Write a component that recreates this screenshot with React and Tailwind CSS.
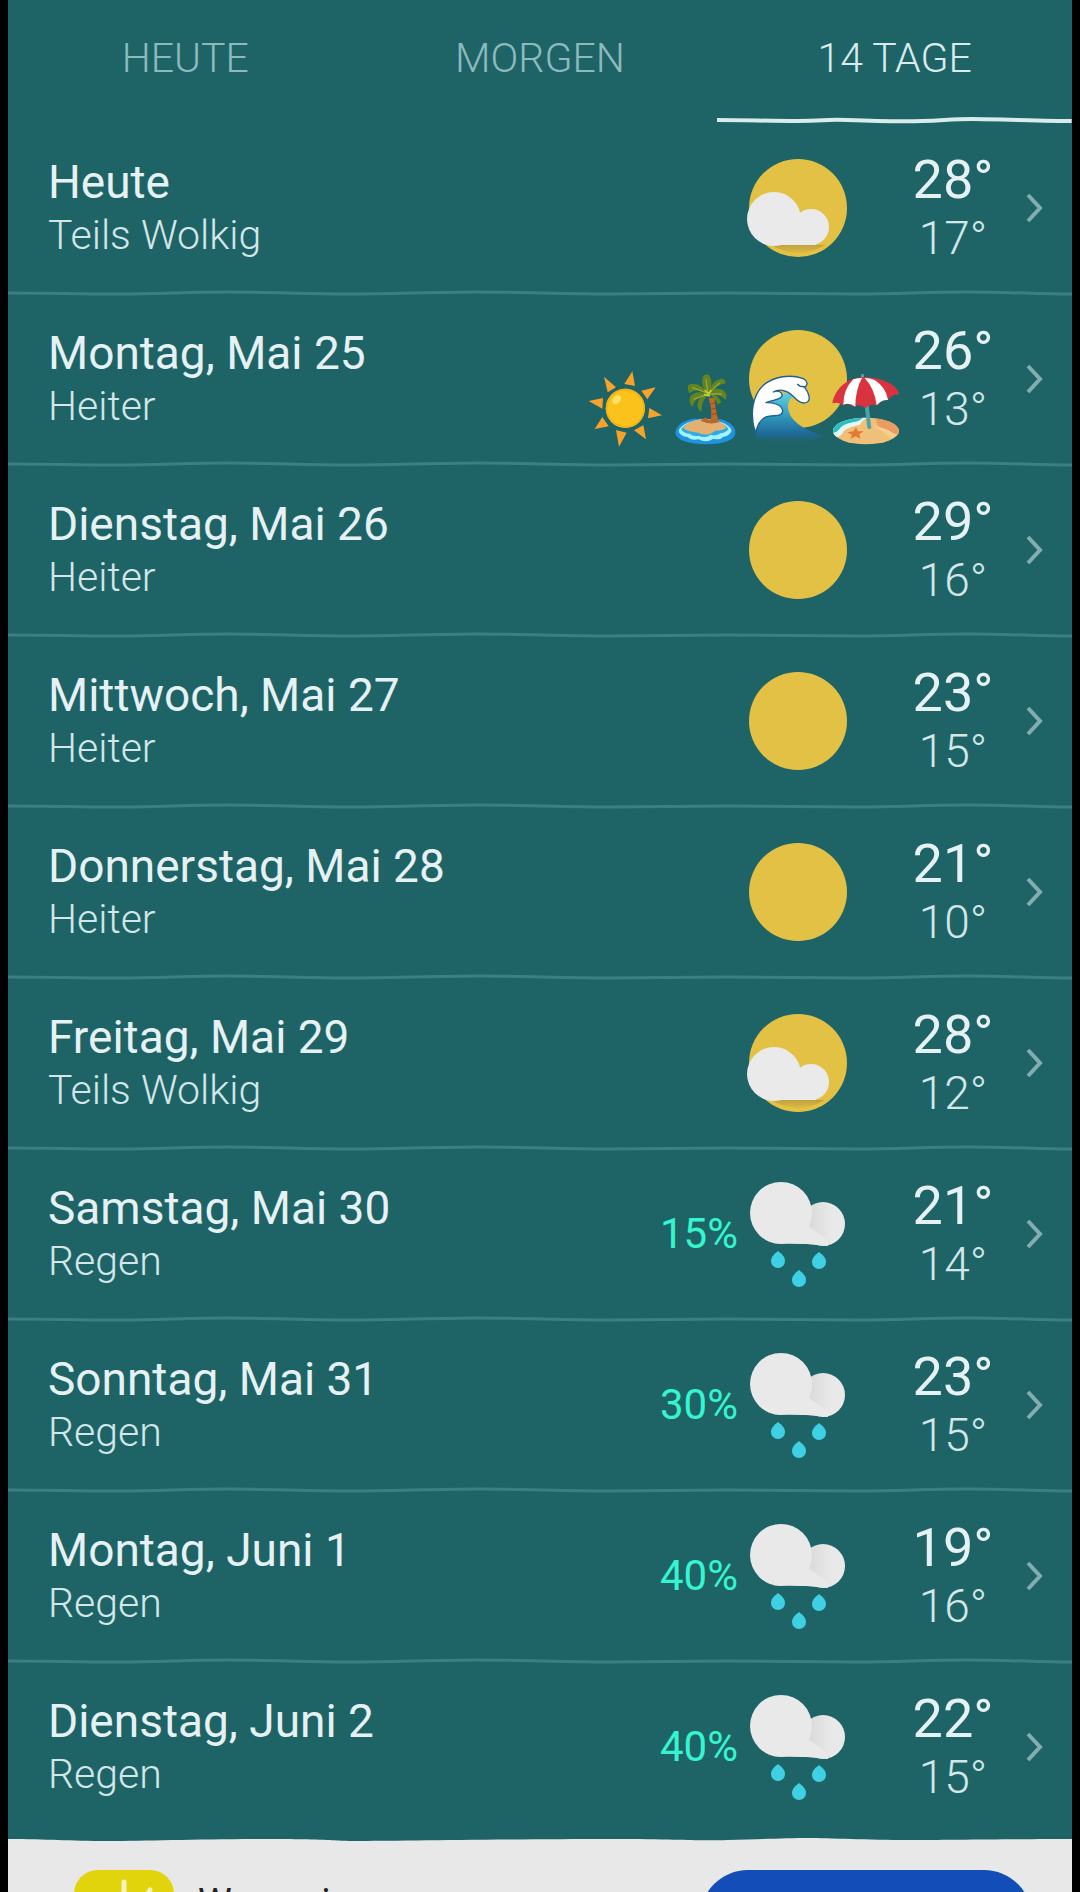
import React, { useState } from "react";

const tabs = ["HEUTE", "MORGEN", "14 TAGE"];

const days = [
  { day: "Heute", text: "Teils Wolkig", icon: "partly", high: 28, low: 17 },
  { day: "Montag, Mai 25", text: "Heiter", icon: "sun", high: 26, low: 13, stickers: true },
  { day: "Dienstag, Mai 26", text: "Heiter", icon: "sun", high: 29, low: 16 },
  { day: "Mittwoch, Mai 27", text: "Heiter", icon: "sun", high: 23, low: 15 },
  { day: "Donnerstag, Mai 28", text: "Heiter", icon: "sun", high: 21, low: 10 },
  { day: "Freitag, Mai 29", text: "Teils Wolkig", icon: "partly", high: 28, low: 12 },
  { day: "Samstag, Mai 30", text: "Regen", icon: "rain", rain: 15, high: 21, low: 14 },
  { day: "Sonntag, Mai 31", text: "Regen", icon: "rain", rain: 30, high: 23, low: 15 },
  { day: "Montag, Juni 1", text: "Regen", icon: "rain", rain: 40, high: 19, low: 16 },
  { day: "Dienstag, Juni 2", text: "Regen", icon: "rain", rain: 40, high: 22, low: 15 },
];

const Sun = () => <circle cx="52" cy="54" r="49" fill="#e3c145" />;

const Drop = ({ x, y }) => (
  <path
    d={`M${x} ${y - 8} C${x + 4} ${y - 5} ${x + 7} ${y - 2} ${x + 7} ${y + 2} A7 7 0 0 1 ${x - 7} ${y + 2} C${x - 7} ${y - 2} ${x - 4} ${y - 5} ${x} ${y - 8} Z`}
    fill="#3fd0e4"
  />
);

const WeatherIcon = ({ type }) => (
  <svg viewBox="0 0 104 108" className="h-[108px] w-[104px] shrink-0" aria-hidden="true">
    <defs>
      <linearGradient id="sunShade" x1="0" y1="0" x2="0" y2="1">
        <stop offset="0" stopColor="#bd9f3d" />
        <stop offset="1" stopColor="#dcba43" />
      </linearGradient>
      <linearGradient id="puffShade" x1="0" y1="0" x2="1" y2="0">
        <stop offset="0.15" stopColor="#d9d9da" />
        <stop offset="0.7" stopColor="#e9e9ea" />
      </linearGradient>
    </defs>
    {type === "sun" && <Sun />}
    {type === "partly" && (
      <>
        <Sun />
        <path d="M24 90 A49 49 0 0 0 79 91 Z" fill="url(#sunShade)" />
        <g fill="#eaeaeb">
          <circle cx="28" cy="65" r="27" />
          <circle cx="65" cy="73" r="18" />
          <path d="M24 91 L26 60 L52 62 L66 66 L70 91 Z" />
        </g>
      </>
    )}
    {type === "rain" && (
      <>
        <circle cx="77" cy="44" r="22" fill="url(#puffShade)" />
        <g fill="#e9e9ea">
          <circle cx="35" cy="33" r="31" />
          <path d="M28 63 L62 46 L82 60 L82 66 L60 64 Z" />
          <path d="M28 63 L36 50 L58 54 L60 64 Z" />
        </g>
        <Drop x={32} y={79} />
        <Drop x={73} y={80} />
        <Drop x={53} y={98} />
      </>
    )}
  </svg>
);

const SunSticker = () => (
  <svg viewBox="81 183 228 228" className="size-[76px]" aria-hidden="true">
    <g fill="#f7a32a">
      <path d="M217 184 L225 228 L193 222 Z" />
      <path d="M287 232 L262 268 L244 242 Z" />
      <path d="M306 316 L264 325 L268 294 Z" />
      <path d="M258 388 L222 361 L250 346 Z" />
      <path d="M177 410 L168 360 L200 368 Z" />
      <path d="M104 357 L127 321 L146 349 Z" />
      <path d="M86 273 L129 264 L127 296 Z" />
      <path d="M132 200 L168 232 L143 247 Z" />
    </g>
    <circle cx="196" cy="295" r="59" fill="#fbc21b" />
    <circle cx="196" cy="295" r="56" fill="none" stroke="#f5b014" strokeWidth="5" />
    <ellipse cx="170" cy="269" rx="15" ry="11" transform="rotate(-45 170 269)" fill="#fde065" />
  </svg>
);

const IslandSticker = () => (
  <svg viewBox="321 183 228 228" className="size-[76px]" aria-hidden="true">
    <path d="M346 368 Q352 334 400 326 L482 328 Q526 340 526 370 Q522 402 437 403 Q350 400 346 368 Z" fill="#1f93e0" />
    <path d="M356 362 Q366 334 436 326 Q506 334 515 362 Q508 378 490 380 Q480 392 460 386 Q438 400 416 388 Q392 392 384 382 Q358 378 356 362 Z" fill="#a5f3fb" />
    <path d="M364 358 Q376 336 436 328 Q498 338 505 358 Q496 369 482 370 Q468 380 452 374 Q436 386 416 377 Q398 380 390 371 Q368 370 364 358 Z" fill="#2aa9ec" />
    <path d="M370 355 Q380 332 436 327 Q492 332 499 354 Q484 364 466 362 Q440 382 414 368 Q384 366 370 355 Z" fill="#e2b171" />
    <path d="M446 264 L464 264 Q466 305 476 333 Q460 342 452 334 Q458 300 446 264 Z" fill="#c2692a" />
    <path d="M452 282 L466 278 M455 298 L468 294 M456 314 L471 310" stroke="#9a4a1c" strokeWidth="3" />
    <path d="M422 332 Q434 316 448 330 Q466 320 478 336 Q450 346 422 332 Z" fill="#b5682f" />
    <g fill="#64841f">
      <path d="M446 250 Q422 236 428 202 Q436 188 448 196 Q462 222 446 250 Z" />
      <path d="M446 250 Q452 212 484 206 Q498 208 496 220 Q474 222 446 250 Z" />
      <path d="M446 250 Q474 224 496 246 Q502 258 498 270 Q476 250 446 250 Z" />
      <path d="M446 252 Q414 210 384 226 Q382 242 388 250 Q412 230 446 252 Z" />
      <path d="M446 252 Q404 238 390 262 Q386 278 396 290 Q410 254 446 252 Z" />
      <path d="M446 252 Q414 258 412 286 Q414 300 424 306 Q424 270 446 252 Z" />
      <path d="M446 252 Q470 248 484 276 L474 284 Q464 262 446 252 Z" />
    </g>
    <path d="M444 250 L438 208 M446 250 L480 218 M444 250 L396 232 M444 252 L400 268 M446 252 L486 252" stroke="#93a83a" strokeWidth="4" fill="none" />
    <path d="M434 240 L446 252 L454 240 M432 254 L450 258" stroke="#c8d42f" strokeWidth="5" fill="none" />
  </svg>
);

const WaveSticker = () => (
  <svg viewBox="561 183 228 228" className="size-[76px]" aria-hidden="true">
    <defs>
      <linearGradient id="water" x1="0" y1="0" x2="0" y2="1">
        <stop offset="0" stopColor="#5fd0dd" />
        <stop offset="0.5" stopColor="#2f93b8" />
        <stop offset="0.8" stopColor="#1e6a9c" />
        <stop offset="1" stopColor="#1e6478" stopOpacity="0.2" />
      </linearGradient>
    </defs>
    <path d="M586 386 Q592 320 640 268 Q664 240 704 256 Q672 276 690 314 Q710 352 789 378 Q760 398 690 398 Q620 400 586 386 Z" fill="url(#water)" />
    <path
      d="M586 368 C568 312 578 256 610 226 C642 198 692 192 730 206 C744 214 744 224 734 232 C748 250 752 270 742 276 C724 286 708 268 696 256 C680 240 656 236 640 246 C654 240 668 246 666 258 C662 270 640 268 618 278 C642 276 668 286 668 304 C666 322 640 314 620 320 C600 328 594 344 586 368 Z"
      fill="#ffffff"
      stroke="#1d5f96"
      strokeWidth="4"
      strokeLinejoin="round"
    />
    <path d="M712 222 Q720 232 736 230" fill="none" stroke="#1d5f96" strokeWidth="4" />
  </svg>
);

const BeachSticker = () => (
  <svg viewBox="801 183 228 228" className="size-[76px]" aria-hidden="true">
    <defs>
      <clipPath id="sandClip">
        <ellipse cx="918" cy="363" rx="99" ry="40" />
      </clipPath>
    </defs>
    <g clipPath="url(#sandClip)">
      <rect x="815" y="320" width="210" height="90" fill="#f0c078" />
      <path d="M815 318 H932 Q906 330 900 344 Q866 350 852 362 Q846 376 832 382 L815 380 Z" fill="#e8f6f3" />
      <path d="M815 318 H914 Q900 334 882 336 Q846 342 838 358 Q830 368 815 370 Z" fill="#27bfc4" />
      <path d="M946 324 Q1012 330 1018 372 Q980 372 954 350 Z" fill="#eb9c62" />
      <path d="M940 346 Q976 352 1010 376 L996 386 Q966 364 940 346 Z" fill="#f6cf90" />
    </g>
    <path d="M888 352 L894 364 L911 364 L898 373 L901 386 L887 379 L872 387 L876 374 L862 367 L880 364 Z" fill="#e27a35" />
    <path d="M914 286 L926 286 L934 354 Q930 360 922 354 Z" fill="#4ba3ab" />
    <rect x="903" y="192" width="9" height="16" rx="3" fill="#5b9eaa" />
    <path d="M817 280 C826 232 866 202 912 202 C964 202 1010 222 1018 254 Q998 252 984 270 Q966 268 950 286 Q932 280 916 294 Q898 280 880 290 Q864 276 850 286 Q834 274 817 280 Z" fill="#d9333f" />
    <path d="M880 208 Q894 204 906 204 Q886 240 886 290 Q868 276 850 284 Q850 238 880 208 Z" fill="#ffffff" />
    <path d="M914 204 Q930 204 944 210 Q978 232 984 270 Q966 268 950 286 Q944 236 914 204 Z" fill="#ffffff" />
  </svg>
);

const Separator = () => (
  <svg viewBox="0 0 1064 4" preserveAspectRatio="none" className="block h-1 w-full overflow-visible" aria-hidden="true">
    <path
      d="M0 2 C40 2 70 3 110 3 S180 1 220 1 S300 3 340 3 S430 1 470 1 S560 3 600 3 S680 2 720 2 S810 3 850 3 S920 1 960 1 S1030 3 1064 3"
      fill="none"
      stroke="#3b7f83"
      strokeWidth="3"
    />
  </svg>
);

const DayRow = ({ item, last }) => (
  <li className="relative">
    <a href="#" className="flex h-[167px] items-center pr-6 pl-10">
      <div className="min-w-0 flex-1">
        <p className="text-[46px] leading-[54px]">{item.day}</p>
        <p className="text-[41px] leading-[52px] font-light text-[#d3e6e8]">{item.text}</p>
      </div>
      {item.rain && <span className="mr-2 text-[42px] text-[#35f5cf]">{item.rain}%</span>}
      <WeatherIcon type={item.icon} />
      <div className="ml-10 w-[126px] text-center">
        <p className="text-[54px] leading-[60px]">{item.high}°</p>
        <p className="text-[46px] leading-[56px] font-light text-[#d3e6e8]">{item.low}°</p>
      </div>
      <svg viewBox="0 0 24 32" className="ml-2 h-8 w-6" aria-hidden="true">
        <path d="M4 3 L16 16 L4 29" fill="none" stroke="#83adb1" strokeWidth="4" />
      </svg>
    </a>
    {item.stickers && (
      <div className="pointer-events-none absolute top-[76px] right-[169px] flex gap-1">
        <SunSticker />
        <IslandSticker />
        <WaveSticker />
        <BeachSticker />
      </div>
    )}
    {!last && <Separator />}
  </li>
);

const App = () => {
  const [active, setActive] = useState("14 TAGE");

  return (
    <div className="h-screen overflow-hidden bg-black px-2 font-[Roboto,sans-serif]">
      <main className="min-h-full bg-[#1e6467] text-[#e6f1f4]">
        <nav className="grid grid-cols-3">
          {tabs.map((tab) => (
            <button
              key={tab}
              type="button"
              onClick={() => setActive(tab)}
              className={
                active === tab
                  ? "pt-8 text-[41px] leading-[52px] font-light text-[#d9ebed]"
                  : "pt-8 text-[41px] leading-[52px] font-light text-[#8dbabd]"
              }
            >
              {tab}
              <svg viewBox="0 0 354 8" preserveAspectRatio="none" className="mt-8 block h-2 w-full" aria-hidden="true">
                {active === tab && (
                  <path
                    d="M0 4 C30 4 50 5 80 5 S105 3 130 4 S180 6 205 5 S235 3 255 3 S330 5 354 5"
                    fill="none"
                    stroke="#d9ebea"
                    strokeWidth="4"
                  />
                )}
              </svg>
            </button>
          ))}
        </nav>

        <ul>
          {days.map((item, index) => (
            <DayRow key={item.day} item={item} last={index === days.length - 1} />
          ))}
        </ul>

        {/* Ad banner */}
        <svg viewBox="0 0 1064 4" preserveAspectRatio="none" className="mt-2 block h-1 w-full" aria-hidden="true">
          <path
            d="M0 1 C40 1 60 3 100 3 S190 1 260 1 S320 3 350 3 S520 1 600 1 S680 3 720 2 S780 0 800 0 S860 2 900 2 S1020 1 1064 1 V4 H0 Z"
            fill="#e8e8e8"
          />
        </svg>
        <section className="flex items-start bg-[#e8e8e8] pt-7 pr-10 pl-[66px] text-[#222]">
          <svg viewBox="0 0 100 100" className="size-[100px]" aria-hidden="true">
            <rect width="100" height="100" rx="24" fill="#e1d40c" />
            <path d="M50 12 V60 M76 20 L70 30" stroke="#f6f2c0" strokeWidth="5" strokeLinecap="round" />
          </svg>
          <p className="ml-6 flex-1 pt-2 text-[38px] leading-[50px]">Wegweiser</p>
          <button type="button" aria-label="Installieren" className="h-[110px] w-[332px] rounded-[48px] bg-[#124db8]" />
        </section>
      </main>
    </div>
  );
};

export default App;
